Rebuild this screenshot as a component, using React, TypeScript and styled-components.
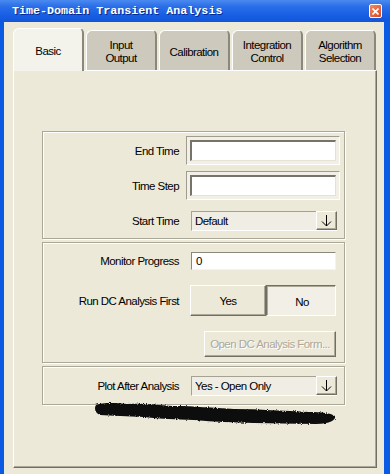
import styled, { createGlobalStyle } from 'styled-components';

const GlobalStyle = createGlobalStyle`
  body {
    margin: 0;
    font-family: 'Liberation Sans', Arial, sans-serif;
  }
`;

const Window = styled.div`
  width: 390px;
  height: 474px;
  display: flex;
  flex-direction: column;
  background: #0b5ae3;
  overflow: hidden;
`;

const TitleBar = styled.div`
  height: 22px;
  flex-shrink: 0;
  display: flex;
  align-items: center;
  justify-content: space-between;
  padding: 0 8px 0 12px;
  background: linear-gradient(#4a8af0 0%, #2a6ee8 30%, #165ee4 70%, #1256d8 100%);
`;

const Title = styled.span`
  font-family: 'Liberation Mono', 'DejaVu Sans Mono', monospace;
  font-weight: bold;
  font-size: 11.7px;
  color: #fff;
  text-shadow: 1px 1px 0 #0a2a8a;
`;

const CloseButton = styled.div`
  width: 13px;
  height: 14px;
  box-sizing: border-box;
  border: 1px solid #fff;
  border-radius: 2px;
  background: linear-gradient(135deg, #f08a66, #d94a20);
  display: flex;
  align-items: center;
  justify-content: center;
`;

const Body = styled.div`
  flex: 1;
  margin: 0 6px 0 4px;
  background: #ece9d8;
  padding: 6px 7px 6px 9px;
  display: flex;
  flex-direction: column;
`;

const TabRow = styled.div`
  height: 42px;
  display: flex;
  align-items: flex-end;
  gap: 2px;
`;

const Tab = styled.div<{ $active?: boolean }>`
  position: relative;
  z-index: ${(p) => (p.$active ? 1 : 0)};
  width: 71px;
  height: ${(p) => (p.$active ? '43px' : '40px')};
  margin-bottom: ${(p) => (p.$active ? '-1px' : '0')};
  box-sizing: border-box;
  padding-top: 3px;
  display: flex;
  align-items: center;
  justify-content: center;
  text-align: center;
  white-space: pre-line;
  font-size: 11.5px;
  letter-spacing: -0.55px;
  line-height: 13px;
  color: #000;
  background: ${(p) => (p.$active ? '#f3f2eb' : '#cdc9bd')};
  border-top: 1px solid #fff;
  border-left: 1px solid #fff;
  border-right: 2px solid #8a887d;
  border-top-left-radius: 6px;
  border-top-right-radius: 5px;
`;

const Panel = styled.div`
  height: 398px;
  box-sizing: border-box;
  position: relative;
  border-top: 1px solid #fff;
  border-left: 1px solid #fff;
  border-right: 1px solid #716f64;
  border-bottom: 1px solid #716f64;
  box-shadow: inset -1px -1px 0 #aca899;
  padding: 60px 31px 0 28px;
  display: flex;
  flex-direction: column;
  gap: 3px;
`;

const Group = styled.div<{ $pad: string }>`
  border: 1px solid #aca899;
  box-shadow: inset 1px 1px 0 #fff, 1px 1px 0 #fff;
  padding: ${(p) => p.$pad};
  display: flex;
  flex-direction: column;
`;

const Row = styled.div<{ $top?: number }>`
  display: flex;
  align-items: center;
  margin-top: ${(p) => p.$top ?? 0}px;
`;

const Label = styled.div`
  width: 136px;
  flex-shrink: 0;
  text-align: right;
  font-size: 11.5px;
  letter-spacing: -0.55px;
  color: #000;
`;

const DoubleField = styled.div`
  margin-left: 7px;
  width: 154px;
  height: 29px;
  box-sizing: border-box;
  border-top: 1px solid #a09d90;
  border-left: 1px solid #a09d90;
  border-right: 1px solid #fff;
  border-bottom: 1px solid #fff;
  background: #f1efe6;
  padding: 3px;
  display: flex;
`;

const DoubleInner = styled.div`
  flex: 1;
  background: #fff;
  border-top: 2px solid #75736a;
  border-left: 2px solid #75736a;
  border-right: 1px solid #e4e2d6;
  border-bottom: 1px solid #e4e2d6;
`;

const Combo = styled.div`
  margin-left: 12px;
  width: 146px;
  height: 20px;
  box-sizing: border-box;
  border-top: 1px solid #a5a293;
  border-left: 1px solid #a5a293;
  border-bottom: 1px solid #fff;
  background: #efede4;
  display: flex;
  align-items: stretch;
`;

const ComboText = styled.div`
  flex: 1;
  padding-left: 3px;
  display: flex;
  align-items: center;
  font-size: 11.5px;
  letter-spacing: -0.55px;
  color: #000;
`;

const ComboButton = styled.div`
  width: 21px;
  margin-top: -1px;
  box-sizing: border-box;
  border-top: 1px solid #fff;
  border-left: 1px solid #fff;
  border-right: 1px solid #716f64;
  border-bottom: 1px solid #716f64;
  box-shadow: inset -1px -1px 0 #aca899;
  background: #ece9d8;
  display: flex;
  align-items: center;
  justify-content: center;
`;

const TextField = styled.div`
  margin-left: 12px;
  width: 145px;
  height: 18px;
  box-sizing: border-box;
  border-top: 1px solid #8a877b;
  border-left: 1px solid #8a877b;
  border-right: 1px solid #f4f3ee;
  border-bottom: 1px solid #f4f3ee;
  background: #fff;
  padding-left: 4px;
  display: flex;
  align-items: center;
  font-size: 11.5px;
  color: #000;
`;

const Toggle = styled.div`
  margin-left: 11px;
  display: flex;
`;

const Button = styled.div<{ $pressed?: boolean; $disabled?: boolean; $w: number; $h: number }>`
  width: ${(p) => p.$w}px;
  height: ${(p) => p.$h}px;
  box-sizing: border-box;
  display: flex;
  align-items: center;
  justify-content: center;
  font-size: 11.5px;
  letter-spacing: -0.55px;
  color: ${(p) => (p.$disabled ? '#aca899' : '#000')};
  text-shadow: ${(p) => (p.$disabled ? '1px 1px 0 #fff' : 'none')};
  background: ${(p) => (p.$pressed ? '#f1efe6' : '#ece9d8')};
  border-style: solid;
  border-width: 1px;
  border-color: ${(p) =>
    p.$pressed ? '#716f64 #fff #fff #716f64' : '#fff #716f64 #716f64 #fff'};
  box-shadow: ${(p) =>
    p.$pressed ? 'inset 1px 1px 0 #aca899' : 'inset -1px -1px 0 #aca899'};
  padding: ${(p) => (p.$pressed ? '2px 0 0 2px' : '0')};
`;

const FormButtonRow = styled.div`
  display: flex;
  margin-top: 15px;
  padding-left: 161px;
`;

const Scribble = styled.svg`
  position: absolute;
  left: 78px;
  top: 328px;
`;

const DownArrow = () => (
  <svg width="11" height="13" viewBox="0 0 11 13">
    <line x1="5.5" y1="1" x2="5.5" y2="12" stroke="#000" strokeWidth="1" />
    <polyline points="1,7.5 5.5,12 10,7.5" fill="none" stroke="#000" strokeWidth="1" />
  </svg>
);

const ComboBox = ({ value }: { value: string }) => (
  <Combo>
    <ComboText>{value}</ComboText>
    <ComboButton>
      <DownArrow />
    </ComboButton>
  </Combo>
);

const tabs = [
  { label: 'Basic', active: true },
  { label: 'Input\nOutput' },
  { label: 'Calibration' },
  { label: 'Integration\nControl' },
  { label: 'Algorithm\nSelection' },
];

export default function App() {
  return (
    <>
      <GlobalStyle />
      <Window>
        <TitleBar>
          <Title>Time-Domain Transient Analysis</Title>
          <CloseButton>
            <svg width="7" height="7" viewBox="0 0 7 7">
              <path d="M0.5 0.5 L6.5 6.5 M6.5 0.5 L0.5 6.5" stroke="#fff" strokeWidth="1.6" />
            </svg>
          </CloseButton>
        </TitleBar>
        <Body>
          <TabRow>
            {tabs.map((t) => (
              <Tab key={t.label} $active={t.active}>
                {t.label}
              </Tab>
            ))}
          </TabRow>
          <Panel>
            <Group $pad="4px 0 7px 0">
              <Row>
                <Label>End Time</Label>
                <DoubleField>
                  <DoubleInner />
                </DoubleField>
              </Row>
              <Row $top={6}>
                <Label>Time Step</Label>
                <DoubleField>
                  <DoubleInner />
                </DoubleField>
              </Row>
              <Row $top={11}>
                <Label>Start Time</Label>
                <ComboBox value="Default" />
              </Row>
            </Group>
            <Group $pad="9px 0 5px 0">
              <Row>
                <Label>Monitor Progress</Label>
                <TextField>0</TextField>
              </Row>
              <Row $top={15}>
                <Label>Run DC Analysis First</Label>
                <Toggle>
                  <Button $w={76} $h={31}>Yes</Button>
                  <Button $w={70} $h={31} $pressed>No</Button>
                </Toggle>
              </Row>
              <FormButtonRow>
                <Button $w={132} $h={26} $disabled>Open DC Analysis Form...</Button>
              </FormButtonRow>
            </Group>
            <Group $pad="9px 0 8px 0">
              <Row>
                <Label>Plot After Analysis</Label>
                <ComboBox value="Yes - Open Only" />
              </Row>
            </Group>
            <Scribble width="248" height="30" viewBox="0 0 248 30">
              <defs>
                <filter id="rough" x="-5%" y="-30%" width="110%" height="160%">
                  <feTurbulence type="fractalNoise" baseFrequency="0.9" numOctaves="2" seed="3" />
                  <feDisplacementMap in="SourceGraphic" scale="3" />
                </filter>
              </defs>
              <path
                filter="url(#rough)"
                d="M4 6 C12 3 24 4 36 5 C52 4 64 6 82 7 C102 7 120 9 142 10 C167 10 192 12 217 13 C230 13 238 14 243 17 C244 21 238 25 224 25 C202 25 182 24 162 24 C142 23 122 23 102 21 C84 20 68 20 52 18 C36 17 20 17 8 16 C3 14 2 9 4 6 Z"
                fill="#0a0a0a"
              />
            </Scribble>
          </Panel>
        </Body>
      </Window>
    </>
  );
}
